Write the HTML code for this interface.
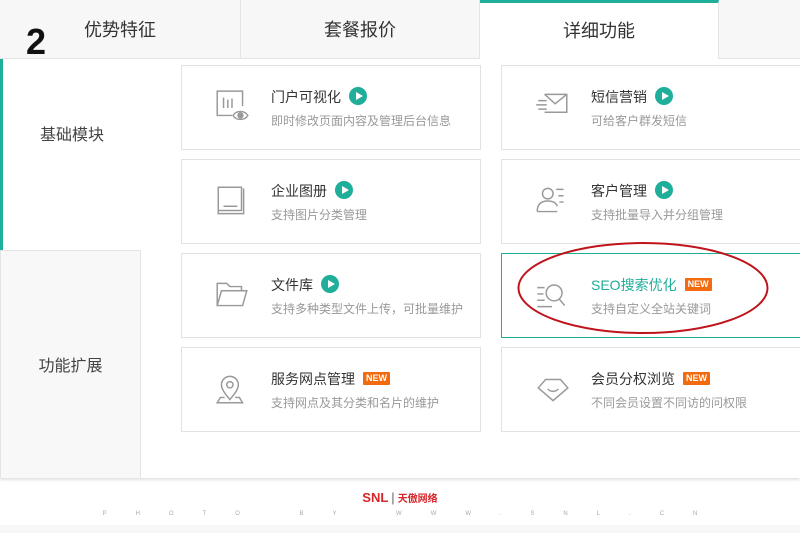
<!DOCTYPE html>
<html><head><meta charset="utf-8"><style>
*{margin:0;padding:0;box-sizing:border-box}
body{width:800px;height:533px;overflow:hidden;background:#f7f7f7;font-family:"Liberation Sans","Noto Sans CJK SC",sans-serif;position:relative}
.band{position:absolute;left:0;top:0;width:800px;height:525px;background:#fff}
.main{position:absolute;left:0;top:0;width:800px;height:478px;background:#fff;box-shadow:0 2px 3px rgba(0,0,0,.12)}
.tab{position:absolute;top:0;height:59px;background:#f7f7f7;border-right:1px solid #e4e4e4;border-bottom:1px solid #e4e4e4;font-size:18px;color:#333;text-align:center;line-height:60px}
.tab.on{background:#fff;border-top:3px solid #1fae9a;border-bottom:none;line-height:56px}
.num{position:absolute;left:26px;top:20px;font-size:36px;font-weight:bold;color:#111;font-family:"Liberation Sans",sans-serif;line-height:44px}
.side{position:absolute;left:0;width:141px;font-size:16px;color:#444;text-align:center}
.s1{top:59px;height:191px;background:#fff;border-left:3px solid #1fae9a;padding-top:62px;width:141px}
.s2{top:250px;height:228px;background:#f8f8f8;border-left:1px solid #e4e4e4;border-right:1px solid #e4e4e4;border-top:1px solid #e4e4e4;padding-top:101px}
.card{position:absolute;width:300px;height:85px;border:1px solid #e2e2e2;background:#fff}
.card.hl{border:1px solid #1fae9a !important}
.card svg{position:absolute;left:31px;top:22px}
.t{position:absolute;left:89px;top:21px;font-size:14px;color:#333;white-space:nowrap;line-height:20px}
.d{position:absolute;left:89px;top:46px;font-size:12px;color:#999;white-space:nowrap;line-height:18px}
.play{display:inline-block;width:18px;height:18px;border-radius:50%;background:#1fae9a;vertical-align:-3px;margin-left:8px;position:relative}
.play:after{content:"";position:absolute;left:7px;top:4.5px;border-left:7px solid #fff;border-top:4.5px solid transparent;border-bottom:4.5px solid transparent}
.new{display:inline-block;background:#f26b0f;color:#fff;font-size:9px;font-weight:bold;padding:0 3px;line-height:13px;vertical-align:3px;margin-left:8px;border-radius:1px}
.foot{position:absolute;top:490px;left:0;width:800px;text-align:center}
</style></head><body>
<div class="band"></div>
<div class="main">
<div class="tab" style="left:0;width:241px">优势特征</div>
<div class="tab" style="left:241px;width:239px">套餐报价</div>
<div class="tab on" style="left:480px;width:239px">详细功能</div>
<div class="tab" style="left:719px;width:81px;border-right:none"></div>
<div class="num">2</div>
<div class="side s1">基础模块</div>
<div class="side s2">功能扩展</div>

<div class="card" style="left:181px;top:65px">
<svg width="38" height="38" viewBox="0 0 36 34" fill="none" stroke="#999" stroke-width="1.4"><path d="M18 25H4V2h24v14"/><path d="M10 8v10M14 10v8M18 9v9"/><path d="M19 25c3-5 11-5 14 0c-3 5-11 5-14 0z"/><circle cx="26" cy="25" r="2.3" fill="#999"/></svg>
<div class="t">门户可视化<span class="play"></span></div><div class="d">即时修改页面内容及管理后台信息</div></div>
<div class="card" style="left:501px;top:65px">
<svg width="38" height="38" viewBox="0 0 36 34" fill="none" stroke="#999" stroke-width="1.4"><path d="M11 5h21v17H11"/><path d="M11 5l10 9 11-9"/><path d="M5 11h8M3 15h10M5 19h8"/></svg>
<div class="t">短信营销<span class="play"></span></div><div class="d">可给客户群发短信</div></div>

<div class="card" style="left:181px;top:159px">
<svg width="38" height="38" viewBox="0 0 36 34" fill="none" stroke="#999" stroke-width="1.4"><path d="M5 4h22v22H5zM5 26v3h24V5M10 22h13"/></svg>
<div class="t">企业图册<span class="play"></span></div><div class="d">支持图片分类管理</div></div>
<div class="card" style="left:501px;top:159px">
<svg width="38" height="38" viewBox="0 0 36 34" fill="none" stroke="#999" stroke-width="1.4"><circle cx="14" cy="10" r="5"/><path d="M4 27c0-8 5-10 10-10s8 2 9 5M4 27h19"/><path d="M22 6h7M24 12h5M25 18h4"/></svg>
<div class="t">客户管理<span class="play"></span></div><div class="d">支持批量导入并分组管理</div></div>

<div class="card" style="left:181px;top:253px">
<svg width="38" height="38" viewBox="0 0 36 34" fill="none" stroke="#999" stroke-width="1.4"><path d="M4 27V6h9l3 3h11v4M4 27l4-14h24l-4 14z"/></svg>
<div class="t">文件库<span class="play"></span></div><div class="d">支持多种类型文件上传，可批量维护</div></div>
<div class="card hl" style="left:501px;top:253px">
<svg width="38" height="38" viewBox="0 0 36 34" fill="none" stroke="#999" stroke-width="1.4"><path d="M4 10h7M4 16h6M4 22h7M4 28h14"/><circle cx="20" cy="15" r="7.5"/><path d="M25 21l5 6"/></svg>
<div class="t" style="color:#1fae9a">SEO搜索优化<span class="new">NEW</span></div><div class="d">支持自定义全站关键词</div></div>

<div class="card" style="left:181px;top:347px">
<svg width="38" height="38" viewBox="0 0 36 34" fill="none" stroke="#999" stroke-width="1.4"><path d="M16 27c-5-6-8-10-8-14a8 8 0 0 1 16 0c0 4-3 8-8 14z"/><circle cx="16" cy="13" r="3"/><path d="M11 25H7l-3 5h24l-3-5h-4"/></svg>
<div class="t">服务网点管理<span class="new">NEW</span></div><div class="d">支持网点及其分类和名片的维护</div></div>
<div class="card" style="left:501px;top:347px">
<svg width="38" height="38" viewBox="0 0 36 34" fill="none" stroke="#999" stroke-width="1.4"><path d="M12 8h14l7 8-14 12L5 16z"/><path d="M14 17c3 3 7 3 10 0"/></svg>
<div class="t">会员分权浏览<span class="new">NEW</span></div><div class="d">不同会员设置不同访的问权限</div></div>

<svg style="position:absolute;left:516px;top:241px" width="254" height="94"><ellipse cx="127" cy="47" rx="124.5" ry="45" fill="none" stroke="#c0141c" stroke-width="2"/></svg>
</div>
<div class="foot">
<div style="font-size:13px;font-weight:bold;color:#d7252c;line-height:16px">SNL<span style="color:#666;font-weight:normal;margin:0 3px">|</span><span style="font-size:10px">天傲网络</span></div>
<div style="font-size:6px;color:#aaa;letter-spacing:29px;margin-top:3px;padding-left:29px">PHOTO BY WWW.SNL.CN</div>
</div>
</body></html>
